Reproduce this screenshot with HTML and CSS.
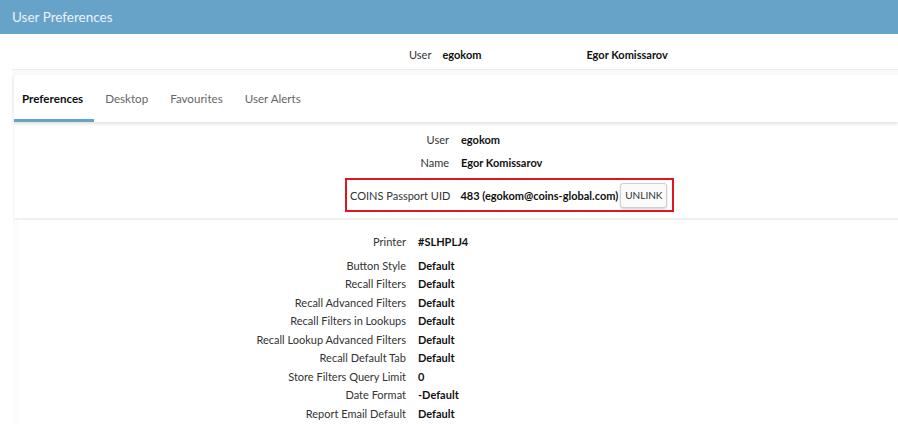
FILE: index.html
```html
<!DOCTYPE html>
<html>
<head>
<meta charset="utf-8">
<link rel="stylesheet" href="styles.css">
</head>
<body>
<header class="topbar">User Preferences</header>
<div class="userbar">
  <span class="ub-label">User</span>
  <span class="ub-value">egokom</span>
  <span class="ub-name">Egor Komissarov</span>
</div>
<div class="strip"></div>
<div class="panel">
  <nav class="tabs">
    <span class="tab active">Preferences</span>
    <span class="tab">Desktop</span>
    <span class="tab">Favourites</span>
    <span class="tab">User Alerts</span>
  </nav>
  <section class="info">
    <div class="irow"><span class="lab">User</span><span class="val">egokom</span></div>
    <div class="irow"><span class="lab">Name</span><span class="val">Egor Komissarov</span></div>
    <div class="irow uid">
      <div class="uidbox">
        <span class="lab">COINS Passport UID</span>
        <span class="val">483 (egokom@coins-global.com)</span>
        <button class="unlink">UNLINK</button>
      </div>
    </div>
  </section>
  <section class="prefs">
    <div class="prow printer"><span class="lab">Printer</span><span class="val">#SLHPLJ4</span></div>
    <div class="prow"><span class="lab">Button Style</span><span class="val">Default</span></div>
    <div class="prow"><span class="lab">Recall Filters</span><span class="val">Default</span></div>
    <div class="prow"><span class="lab">Recall Advanced Filters</span><span class="val">Default</span></div>
    <div class="prow"><span class="lab">Recall Filters in Lookups</span><span class="val">Default</span></div>
    <div class="prow"><span class="lab">Recall Lookup Advanced Filters</span><span class="val">Default</span></div>
    <div class="prow"><span class="lab">Recall Default Tab</span><span class="val">Default</span></div>
    <div class="prow"><span class="lab">Store Filters Query Limit</span><span class="val">0</span></div>
    <div class="prow"><span class="lab">Date Format</span><span class="val">-Default</span></div>
    <div class="prow"><span class="lab">Report Email Default</span><span class="val">Default</span></div>
  </section>
</div>
</body>
</html>
```
FILE: styles.css
```css
html, body {
  margin: 0;
  padding: 0;
  background: #ffffff;
  font-family: Lato, "Open Sans", sans-serif;
  font-size: 11px;
  color: #333;
  overflow: hidden;
}
.topbar {
  height: 34px;
  line-height: 34px;
  background: #67a3c8;
  color: #eaf3f9;
  font-size: 13.5px;
  padding-left: 12px;
}
.userbar {
  display: flex;
  align-items: center;
  height: 36px;
  box-sizing: border-box;
  margin-left: 12px;
  padding-top: 6px;
  padding-left: 397px;
  border-bottom: 1px solid #ececec;
}
.ub-label { color: #333; }
.ub-value { font-weight: bold; color: #111; margin-left: 11px; }
.ub-name { font-weight: bold; color: #111; margin-left: 105px; }
.strip {
  height: 5px;
  margin-left: 12px;
  background: #fafafa;
}
.panel {
  margin-left: 13px;
}
.tabs {
  display: flex;
  height: 47px;
  background: #fff;
  box-shadow: 0 2px 3px rgba(0,0,0,0.12);
  border-left: 1px solid #f2f2f2;
}
.tab {
  display: flex;
  align-items: center;
  padding: 0 11px;
  font-size: 11.6px;
  color: #666;
}
.tab:first-child { padding-left: 8px; padding-right: 11px; }
.tab.active {
  color: #111;
  font-weight: bold;
  box-shadow: inset 0 -3px 0 #67a3c8;
}
.info {
  padding: 6px 0 6px;
  border-bottom: 2px solid #f0f0f0;
  border-left: 1px solid #f6f6f6;
}
.irow {
  display: grid;
  grid-template-columns: 435px auto;
  column-gap: 12px;
  align-items: center;
  height: 23px;
}
.lab { text-align: right; color: #333; }
.val { font-weight: bold; color: #111; }
.irow.uid {
  display: block;
  height: 34px;
  margin-top: 4px;
  padding-left: 331px;
}
.uidbox {
  display: inline-flex;
  align-items: center;
  height: 34px;
  box-sizing: border-box;
  border: 2px solid #e0161c;
  padding: 0 5px 0 3px;
}
.uidbox .lab { margin-right: 10px; }
.unlink {
  margin-left: 2px;
  height: 25px;
  padding: 0 4px;
  font-family: inherit;
  font-size: 10px;
  color: #333;
  background: #fafafa;
  border: 1px solid #d0d0d0;
  border-radius: 3px;
  box-shadow: 0 1px 2px rgba(0,0,0,0.18);
}
.prefs {
  padding-top: 9px;
  border-left: 6px solid #fbfbfb;
}
.prow {
  display: grid;
  grid-template-columns: 387px auto;
  column-gap: 12px;
  align-items: center;
  height: 18.5px;
}
.prow.printer { height: 24px; margin-bottom: 3px; }
```
